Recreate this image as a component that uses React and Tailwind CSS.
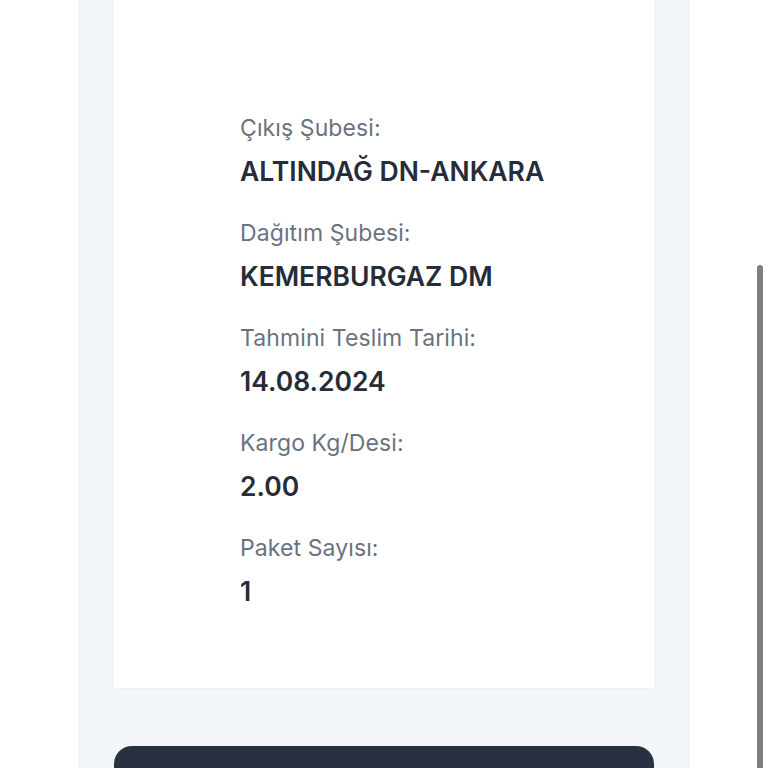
export default function App() {
  const rows = [
    { label: 'Çıkış Şubesi:', value: 'ALTINDAĞ DN-ANKARA' },
    { label: 'Dağıtım Şubesi:', value: 'KEMERBURGAZ DM' },
    { label: 'Tahmini Teslim Tarihi:', value: '14.08.2024' },
    { label: 'Kargo Kg/Desi:', value: '2.00' },
    { label: 'Paket Sayısı:', value: '1' },
  ]

  return (
    <div className="relative h-[768px] w-[768px] overflow-hidden bg-white" style={{ fontFamily: 'Inter, "Noto Sans", sans-serif' }}>
      <div className="ml-[78px] flex h-full w-[612px] flex-col bg-[#f3f6f9] px-[36px]">
        {/* Details card */}
        <div className="flex h-[688px] shrink-0 flex-col gap-[29px] bg-white pl-[126px] pt-[113px] shadow-[0_1px_2px_rgba(0,0,0,0.03)]">
          {rows.map(row => (
            <div key={row.label} className="flex flex-col">
              <p className="text-[23px] leading-[30px] tracking-[0.1px] text-[#6b7280]">{row.label}</p>
              <p className="mt-[10px] text-[26.5px] font-semibold leading-[36px] text-[#262c38]">{row.value}</p>
            </div>
          ))}
        </div>

        {/* Action button */}
        <button className="mt-[58px] h-[60px] w-full shrink-0 rounded-t-[18px] bg-[#283041]" />
      </div>

      {/* Scrollbar thumb */}
      <div className="absolute right-[5px] top-[265px] h-[520px] w-[6px] rounded-full bg-[#7f7f7f]" />
    </div>
  )
}
